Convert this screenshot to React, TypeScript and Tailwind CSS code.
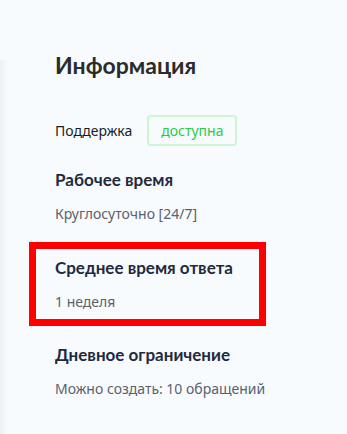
import React from 'react';

const rows = [
    { title: 'Рабочее время', value: 'Круглосуточно [24/7]' },
    { title: 'Среднее время ответа', value: '1 неделя', marked: true },
    { title: 'Дневное ограничение', value: 'Можно создать: 10 обращений' },
];

const App: React.FC = () => {
    return (
        <div className="w-[347px] h-[434px] bg-[#f7fbfe] overflow-hidden flex" style={{ fontFamily: '"Noto Sans", sans-serif' }}>
            <div className="w-[8px] mt-[60px] bg-gradient-to-r from-[#edf1f5] to-transparent" />
            <div className="flex-1 pt-[49px] pl-[47px]">
                <h1 className="text-[23px] leading-[32px] font-bold text-[#2b2b2b]" style={{ fontFamily: 'Lato, "Noto Sans", sans-serif' }}>
                    Информация
                </h1>

                <div className="mt-[34px] flex items-center">
                    <span className="text-[14px] text-[#1d1d1f]">Поддержка</span>
                    <span className="ml-[15px] h-[31px] px-[12px] flex items-center rounded-[4px] border-2 border-[#cdf5d3] text-[14px] text-[#2bcb45]">
                        доступна
                    </span>
                </div>

                <div className="mt-[23px] flex flex-col gap-[18px]">
                    {rows.map(r => (
                        <div
                            key={r.title}
                            className={r.marked ? '-ml-[26px] w-[237px] border-[7px] border-[#ff0000] pl-[19px] pt-[8px] pb-[7px]' : ''}
                        >
                            <div className="text-[17px] leading-[22px] font-bold text-[#1f2a40]" style={{ fontFamily: 'Lato, "Noto Sans", sans-serif' }}>
                                {r.title}
                            </div>
                            <div className="mt-[13px] text-[14px] leading-[20px] text-[#5a616c]">{r.value}</div>
                        </div>
                    ))}
                </div>
            </div>
        </div>
    );
};

export default App;
